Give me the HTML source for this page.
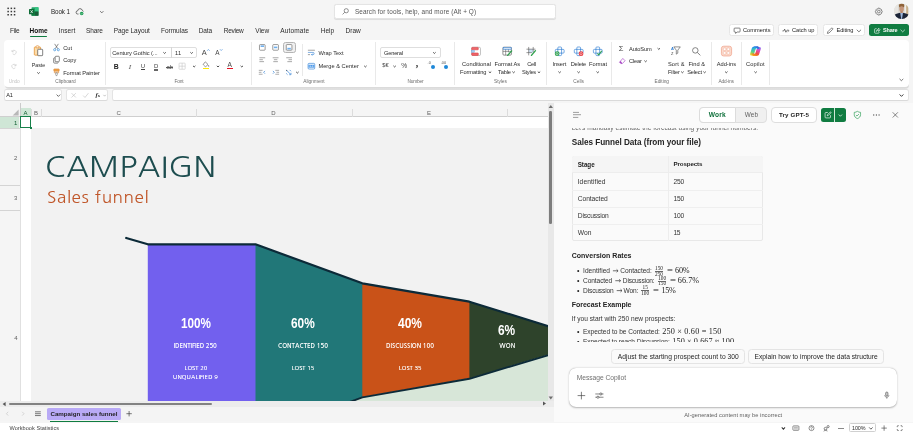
<!DOCTYPE html>
<html lang="en"><head><meta charset="utf-8"><title>Book 1 - Excel</title>
<style>
*{box-sizing:border-box;margin:0;padding:0}
html,body{width:913px;height:433px;overflow:hidden}
body{position:relative;background:#f5f5f5;font-family:'Liberation Sans',sans-serif;color:#242424}
.a{position:absolute}
.t{position:absolute;white-space:pre;line-height:1;font-family:'Liberation Sans',sans-serif}
svg{position:absolute;overflow:visible}
.sep{position:absolute;width:1px;background:#e3e3e3;top:42px;height:43px}
.box{position:absolute;background:#fff;border:1px solid #e4e4e4;border-top-color:#e0e0e0;border-bottom-color:#dadada;border-radius:2.5px}
.btn{position:absolute;background:#fff;border:1px solid #e6e6e6;border-radius:2.5px}
</style></head><body>
<div class="a" style="left:0;top:0;width:913px;height:433px;will-change:transform">

<!-- ============ TITLE BAR ============ -->

<!-- excel logo -->

<!-- cloud saved -->


<!-- search -->
<div class="a" style="left:333.8px;top:4px;width:222.5px;height:15px;background:#fff;border:0.6px solid #e4e4e4;border-radius:2.5px;box-shadow:0 0.5px 0.8px rgba(0,0,0,.10)"></div>

<!-- gear -->

<!-- avatar -->


<!-- ============ MENU ============ -->
<div class="a" style="left:30px;top:35.7px;width:17.2px;height:1.1px;background:#107c41;border-radius:1px"></div>
<!-- top-right buttons -->
<div class="btn" style="left:729px;top:24.4px;width:45.4px;height:11.6px"></div>
<div class="btn" style="left:778px;top:24.4px;width:40.2px;height:11.6px"></div>
<div class="btn" style="left:822.6px;top:24.4px;width:42.6px;height:11.6px"></div>
<div class="a" style="left:869px;top:24.4px;width:40px;height:11.6px;background:#107c41;border-radius:2.5px"></div>







<!-- ============ RIBBON ============ -->
<div class="a" style="left:4.500px;top:84px;width:904px;height:5.400px;background:linear-gradient(#dbdbdb 0,#dbdbdb 80%,#e4e4e4 100%);border-radius:0 0 4px 4px"></div>
<div class="a" style="left:4px;top:40px;width:905px;height:46.600px;background:#fff;border-radius:4px"></div>
<div class="a" style="left:24.3px;top:42px;width:0.7px;height:43px;background:#e9e9e9"></div>
<div class="a" style="left:105.2px;top:42px;width:0.7px;height:43px;background:#e9e9e9"></div>
<div class="a" style="left:251.2px;top:42px;width:0.7px;height:43px;background:#e9e9e9"></div>
<div class="a" style="left:375.0px;top:42px;width:0.7px;height:43px;background:#e9e9e9"></div>
<div class="a" style="left:454.4px;top:42px;width:0.7px;height:43px;background:#e9e9e9"></div>
<div class="a" style="left:546.2px;top:42px;width:0.7px;height:43px;background:#e9e9e9"></div>
<div class="a" style="left:611.1px;top:42px;width:0.7px;height:43px;background:#e9e9e9"></div>
<div class="a" style="left:711.1px;top:42px;width:0.7px;height:43px;background:#e9e9e9"></div>
<div class="a" style="left:740.9px;top:42px;width:0.7px;height:43px;background:#e9e9e9"></div>
<div class="a" style="left:769.4px;top:42px;width:0.7px;height:43px;background:#e9e9e9"></div>
<div class="a" style="left:302.3px;top:44px;width:0.7px;height:31.5px;background:#e9e9e9"></div>







<div class="a" style="left:110.200px;top:46.900px;width:87.200px;height:11px;border:0.600px solid #dedede;border-radius:2px;background:#fff"></div>
<div class="a" style="left:170.500px;top:46.900px;width:0.600px;height:11px;background:#d6d6d6"></div>


<span class="t" style="left:201.800px;top:49.300px;font-size:7.400px;color:#444">A</span>

<span class="t" style="left:215.300px;top:50.100px;font-size:6.400px;color:#444">A</span>




<div class="a" style="left:202.900px;top:67.500px;width:6.400px;height:1.700px;background:#ffea00"></div>


<div class="a" style="left:226.600px;top:67.700px;width:6.400px;height:1.700px;background:#e81123"></div>

<div class="a" style="left:282.600px;top:41.800px;width:13.200px;height:11.200px;border:1px solid #b4b4b4;border-radius:2.500px;background:#efefef"></div>













<div class="a" style="left:379.600px;top:46.900px;width:61px;height:11px;border:0.600px solid #dedede;border-radius:2px;background:#fff"></div>

<span class="t" style="left:382.300px;top:63px;font-size:5.800px;color:#444;letter-spacing:-0.100px">$&#8364;</span>

<span class="t" style="left:401.200px;top:62.900px;font-size:6.600px;color:#444">%</span>
<span class="t" style="left:415.800px;top:59.400px;font-size:10px;font-weight:700;color:#333;font-family:'Liberation Serif',serif">,</span>
<span class="t" style="left:427.59999999999997px;top:62.0px;font-size:3.800px;color:#555">.0</span>
<div class="a" style="left:431.0px;top:65.4px;width:3.600px;height:3.600px;border-radius:2px;background:#1e88d8"></div>
<span class="t" style="left:440.8px;top:62.0px;font-size:3.800px;color:#555">.00</span>
<div class="a" style="left:444.20000000000005px;top:65.4px;width:3.600px;height:3.600px;border-radius:2px;background:#1e88d8"></div>












<span class="t" style="left:618.800px;top:44.600px;font-size:7.600px;color:#444">&#931;</span>














<!-- ============ FORMULA BAR ============ -->
<div class="box" style="left:4px;top:89px;width:58.400px;height:12px"></div>
<div class="box" style="left:66.400px;top:89px;width:41.600px;height:12px"></div>
<div class="box" style="left:112px;top:89px;width:797px;height:12px"></div>



<span class="t" style="left:95.400px;top:91.600px;font-size:6.800px;font-style:italic;font-family:'Liberation Serif',serif;color:#333;font-weight:700">f<span style="font-size:4.400px;font-style:normal">x</span></span>



<!-- ============ GRID ============ -->
<div class="a" style="left:0;top:103px;width:553.6px;height:318px;background:#f5f5f5"></div>
<!-- column header -->
<div class="a" style="left:0;top:107.5px;width:548px;height:9px;background:#f5f5f5;border-bottom:0.7px solid #cfcfcf"></div>
<div class="a" style="left:20.3px;top:107.5px;width:10.7px;height:8.3px;background:#cfe6d6"></div>
<div class="a" style="left:0;top:116.500px;width:18.800px;height:11.500px;background:#cfe6d6"></div>
<div class="a" style="left:19.600px;top:102.600px;width:1px;height:14px;background:#cbcbcb"></div><div class="a" style="left:19.700px;top:116.600px;width:0.800px;height:284.400px;background:#e0e0e0"></div>

<!-- column seps -->
<div class="a" style="left:31px;top:108.500px;width:0.600px;height:8px;background:#dcdcdc"></div>
<div class="a" style="left:41.400px;top:108.500px;width:0.600px;height:8px;background:#dcdcdc"></div>
<div class="a" style="left:196.400px;top:108.500px;width:0.600px;height:8px;background:#dcdcdc"></div>
<div class="a" style="left:351.600px;top:108.500px;width:0.600px;height:8px;background:#dcdcdc"></div>
<div class="a" style="left:506.600px;top:108.500px;width:0.600px;height:8px;background:#dcdcdc"></div>
<!-- row seps -->
<div class="a" style="left:0;top:128px;width:20.300px;height:0.600px;background:#d4d4d4"></div>
<div class="a" style="left:0;top:185.200px;width:20.300px;height:0.600px;background:#d4d4d4"></div>
<div class="a" style="left:0;top:210.300px;width:20.300px;height:0.600px;background:#d4d4d4"></div>

<!-- cells -->
<div class="a" style="left:20.800px;top:116.900px;width:527.200px;height:284.100px;background:#fff"></div>
<div class="a" style="left:31.200px;top:128.200px;width:516.800px;height:272.800px;background:#f2f2f2"></div>
<!-- selection -->
<div class="a" style="left:20.400px;top:116.200px;width:10.900px;height:12.300px;border:0.900px solid #17804a"></div>
<div class="a" style="left:30px;top:127.200px;width:1.800px;height:1.800px;background:#17804a"></div>
<!-- chart -->
<svg class="a" style="left:0;top:0" width="548" height="401" viewBox="0 0 548 401">
<defs><clipPath id="gc"><rect x="31.200" y="128.200" width="516.800" height="272.800"/></clipPath></defs>
<g clip-path="url(#gc)">
<polygon points="345,405 362,397 469.400,378.400 560,351.200 560,405" fill="#d7e6d8"/>
<polygon points="147.800,244.100 257,244.100 257,440 147.800,440" fill="#7260ee"/>
<polygon points="255.500,244.100 364,283.600 364,396.400 255.500,436" fill="#217778"/>
<polygon points="362.300,283 471,301.800 471,378 362.300,397" fill="#c95218"/>
<polygon points="469.400,301.400 560,329.500 560,351.200 469.400,378.400" fill="#2e432b"/>
<polyline points="126.200,238 147.800,244.300 255.500,244.300 362.300,283.300 469.400,301.700 560,329.800" fill="none" stroke="#0c2a38" stroke-width="2.200" stroke-linejoin="round" stroke-linecap="round"/>
<polyline points="255.500,436.400 362.300,397.400 469.400,378.800 560,351.600" fill="none" stroke="#0c2a38" stroke-width="1.900" stroke-linejoin="round"/>
</g></svg>
<!-- v scrollbar -->
<div class="a" style="left:548px;top:103px;width:5.600px;height:298px;background:#e8e8e8"></div>

<div class="a" style="left:549.300px;top:110.600px;width:2.600px;height:113.400px;background:#7d7d7d;border-radius:1.300px"></div>

<!-- h scrollbar -->
<div class="a" style="left:0;top:401px;width:553.600px;height:6px;background:#ececec"></div>

<div class="a" style="left:8.800px;top:402.800px;width:203px;height:2.600px;background:#828282;border-radius:1.300px"></div>

<!-- sheet tabs -->
<div class="a" style="left:0;top:407px;width:553.600px;height:14px;background:#f4f4f4"></div>



<div class="a" style="left:47px;top:408px;width:74px;height:11.600px;background:#b9aaf6;border-radius:1.500px"></div>
<div class="a" style="left:50px;top:420.500px;width:68px;height:1.100px;background:#107c41"></div>


<!-- ============ COPILOT PANEL ============ -->
<div class="a" style="left:553.600px;top:102.600px;width:359.400px;height:319px;background:#fafafa"></div>
<!-- hamburger -->

<!-- work/web toggle -->
<div class="a" style="left:699.300px;top:107px;width:68.200px;height:15.600px;background:#f0f0f0;border:1px solid #dedede;border-radius:4px"></div>
<div class="a" style="left:699.300px;top:107px;width:36.400px;height:15.600px;background:#fff;border:1px solid #dcdcdc;border-radius:4px 0 0 4px"></div>
<!-- try gpt5 -->
<div class="a" style="left:771.400px;top:107px;width:45.200px;height:15.600px;background:#fff;border:1px solid #dedede;border-radius:4px"></div>
<!-- green split button -->
<div class="a" style="left:820.800px;top:108.400px;width:25.400px;height:13.400px;background:#107c41;border-radius:2.500px"></div>
<div class="a" style="left:834.400px;top:108.400px;width:0.500px;height:13.400px;background:#cfe8d8"></div>


<!-- shield -->

<!-- dots -->

<!-- close -->


<!-- table -->
<div class="a" style="left:571.700px;top:155.500px;width:191.500px;height:85.700px;border:0.600px solid #e8e8e8;border-radius:2px;background:#fafafa"></div>
<div class="a" style="left:572.200px;top:156px;width:190.500px;height:16.500px;background:#f5f5f5;border-radius:2px 2px 0 0"></div>
<div class="a" style="left:571.700px;top:172.400px;width:191.500px;height:0.600px;background:#ededed"></div>
<div class="a" style="left:571.700px;top:189.600px;width:191.500px;height:0.600px;background:#efefef"></div>
<div class="a" style="left:571.700px;top:206.800px;width:191.500px;height:0.600px;background:#efefef"></div>
<div class="a" style="left:571.700px;top:224px;width:191.500px;height:0.600px;background:#efefef"></div>
<div class="a" style="left:667.500px;top:155.500px;width:0.600px;height:85.700px;background:#ededed"></div>
<!-- suggestions -->
<div class="a" style="left:611.400px;top:349.400px;width:133.400px;height:14.400px;background:#fafafa;border:0.600px solid #e4e4e4;border-radius:3.500px"></div>
<div class="a" style="left:748.300px;top:349.400px;width:135.700px;height:14.400px;background:#fafafa;border:0.600px solid #e4e4e4;border-radius:3.500px"></div>
<!-- message box -->
<div class="a" style="left:568.700px;top:368.200px;width:328.600px;height:39px;background:#fff;border-radius:7px;box-shadow:0 0.600px 1.800px rgba(0,0,0,.28),0 0 0.600px rgba(0,0,0,.2)"></div>




<!-- ============ STATUS BAR ============ -->
<div class="a" style="left:0;top:422.600px;width:913px;height:10.400px;background:#fff"></div>




<div class="a" style="left:838.400px;top:427.700px;width:5.400px;height:0.800px;background:#8a8a8a"></div>
<div class="a" style="left:849.200px;top:423.400px;width:27.300px;height:8.600px;border:0.600px solid #d0d0d0;border-radius:1.500px;background:#fff"></div>




<svg class="a" style="left:0;top:0;pointer-events:none" width="913" height="433" viewBox="0 0 913 433">
<g transform="translate(7.400,7.600) scale(1.0000,1.0000)" fill="#3b3b3b">
<rect x="0" y="0" width="1.5" height="1.5"/><rect x="3.2" y="0" width="1.5" height="1.5"/><rect x="6.4" y="0" width="1.5" height="1.5"/>
<rect x="0" y="3.2" width="1.5" height="1.5"/><rect x="3.2" y="3.2" width="1.5" height="1.5"/><rect x="6.4" y="3.2" width="1.5" height="1.5"/>
<rect x="0" y="6.4" width="1.5" height="1.5"/><rect x="3.2" y="6.4" width="1.5" height="1.5"/><rect x="6.4" y="6.4" width="1.5" height="1.5"/></g>
<g transform="translate(29.000,7.000) scale(0.5000,0.5000)">
<rect x="5" y="0.5" width="14" height="17" rx="1.5" fill="#21a366"/><rect x="12" y="0.5" width="7" height="8.5" fill="#33c481"/><rect x="5" y="9" width="7" height="8.5" fill="#107c41"/><rect x="12" y="9" width="7" height="8.5" fill="#185c37"/>
<rect x="0" y="4" width="10.5" height="10.5" rx="1.2" fill="#0e6b37"/><path d="M3.2 6.5 L7.4 12 M7.4 6.5 L3.2 12" stroke="#fff" stroke-width="1.4"/></g>
<g transform="translate(75.500,7.800) scale(0.5000,0.5000)" fill="none" stroke="#444" stroke-width="1.5">
<path d="M6 12.5H4.5a3.3 3.3 0 0 1 0-6.6A4.6 4.6 0 0 1 13.5 5 3.4 3.4 0 0 1 15.6 7.5"/><circle cx="12.3" cy="11.5" r="3.6" fill="#1a9c52" stroke="none"/><path d="M10.6 11.6l1.2 1.2 2.1-2.3" stroke="#fff" stroke-width="1.1"/></g>
<g transform="translate(99.600,10.500) scale(0.5500,0.6000)" fill="none" stroke="#555" stroke-width="1.3"><path d="M1 1l3 3 3-3"/></g>
<g transform="translate(342.000,8.000) scale(0.5833,0.5833)" fill="none" stroke="#555" stroke-width="1.1"><circle cx="7.3" cy="4.7" r="3.6"/><path d="M4.7 7.3L1 11"/></g>
<g transform="translate(874.400,7.200) scale(0.5500,0.5500)" fill="none" stroke="#555" stroke-width="1.2"><circle cx="8" cy="8" r="2.4"/><path d="M8 1.6l1.5.4.5 1.6 1.6-.5 1.2 1.2-.5 1.6 1.6.5.4 1.6-.4 1.6-1.6.5.5 1.6-1.2 1.2-1.6-.5-.5 1.6-1.5.4-1.5-.4-.5-1.6-1.6.5-1.2-1.2.5-1.6-1.6-.5L1.700 8l.4-1.600 1.600-.5-.5-1.600 1.200-1.200 1.600.5.500-1.600z" stroke-linejoin="round"/></g>
<g transform="translate(893.900,3.500) scale(0.5133,0.5133)"><defs><clipPath id="av"><circle cx="15" cy="15" r="15"/></clipPath></defs>
<g clip-path="url(#av)"><rect width="30" height="30" fill="#dbd9d4"/><rect x="0" y="0" width="8" height="30" fill="#e7e5e1"/><rect x="21" y="0" width="3" height="30" fill="#efece6"/><rect x="24" y="0" width="3.500" height="30" fill="#c9b08a"/><rect x="27.500" y="0" width="3" height="30" fill="#e3ded5"/>
<ellipse cx="15" cy="4.600" rx="5.200" ry="4.600" fill="#8e6238"/>
<ellipse cx="15" cy="10.800" rx="4.400" ry="5.600" fill="#c4957a"/><rect x="12.800" y="15" width="4.400" height="4.500" fill="#b78669"/>
<path d="M12.300 18.500h5.400L17 30h-4z" fill="#9bb6de"/>
<path d="M0 30v-6.500c2.500-3 7-4 12.300-5.300L14.200 30zM30 30v-6.500c-2.500-3-7-4-12.300-5.300L15.800 30z" fill="#1b2438"/></g></g>
<g transform="translate(733.600,27.600) scale(0.5000,0.4923)" fill="none" stroke="#333" stroke-width="1.2"><path d="M2.500 1h9a1.500 1.500 0 0 1 1.500 1.500v5a1.500 1.500 0 0 1-1.500 1.500H7l-3 2.800V9H2.500A1.500 1.500 0 0 1 1 7.500v-5A1.500 1.500 0 0 1 2.500 1z"/></g>
<g transform="translate(782.200,28.400) scale(0.5143,0.5111)" fill="none" stroke="#333" stroke-width="1.3"><path d="M0.500 5h2.500l1.800-3.500 2.400 6 1.800-3.500h1.500"/><path d="M10.500 2.500l3 2-3 2" stroke-width="1.1"/></g>
<g transform="translate(826.400,27.400) scale(0.5000,0.5000)" fill="none" stroke="#333" stroke-width="1.2"><path d="M2 12l.8-3.300L10 1.500a1.400 1.400 0 0 1 2 0l.5.500a1.400 1.400 0 0 1 0 2L5.300 11.200z"/></g>
<g transform="translate(856.200,29.200) scale(0.5400,0.5333)" fill="none" stroke="#333" stroke-width="1.200"><path d="M1 1l4 4 4-4"/></g>
<g transform="translate(873.600,27.200) scale(0.5000,0.5000)" fill="none" stroke="#fff" stroke-width="1.200"><path d="M6 3H3.500A1.500 1.500 0 0 0 2 4.500v6A1.500 1.500 0 0 0 3.500 12h6a1.500 1.500 0 0 0 1.500-1.500V9"/><path d="M5.500 8.500c.3-2.800 2-4.300 4.500-4.300V2l3 3.200-3 3.200V6.200c-2 0-3.300.6-4.500 2.300z"/></g>
<g transform="translate(900.000,29.200) scale(0.5400,0.5333)" fill="none" stroke="#fff" stroke-width="1.200"><path d="M1 1l4 4 4-4"/></g>
<g transform="translate(11.000,49.000) scale(0.5000,0.5000)" fill="none" stroke="#c6c6c6" stroke-width="1.200"><path d="M2 2v3.500h3.500M2.300 5.300A4.200 4.200 0 1 1 3.300 9.700"/></g>
<g transform="translate(11.000,63.000) scale(0.5000,0.5000)" fill="none" stroke="#c6c6c6" stroke-width="1.200"><path d="M10 2v3.500H6.500M9.700 5.300A4.200 4.200 0 1 0 8.700 9.700"/></g>
<g transform="translate(33.800,45.400) scale(0.5222,0.5143)" ><rect x="1" y="3" width="12" height="16" rx="1.500" fill="#fcdcaa" stroke="#e59433" stroke-width="1.500"/><rect x="4.500" y="0.800" width="5" height="4" rx="1" fill="#fff" stroke="#e08a2c" stroke-width="1.300"/><rect x="7.500" y="7.500" width="9.500" height="12.500" rx="1.300" fill="#fff" stroke="#555" stroke-width="1.400"/></g>
<g transform="translate(36.900,72.040) scale(0.4000,0.3840)" fill="none" stroke="#444" stroke-width="2.4"><path d="M1 1l3 3 3-3"/></g>
<g transform="translate(53.300,43.600) scale(0.5333,0.5429)" ><path d="M2.500 0.500l6 9M9.500 0.500l-6 9" stroke="#555" stroke-width="1.200" fill="none"/><circle cx="2.600" cy="11.300" r="2" fill="none" stroke="#2b88d8" stroke-width="1.200"/><circle cx="9.400" cy="11.300" r="2" fill="none" stroke="#2b88d8" stroke-width="1.200"/></g>
<g transform="translate(53.300,55.900) scale(0.5333,0.5429)" ><rect x="3.500" y="0.700" width="7.800" height="10" rx="1.500" fill="#fff" stroke="#555" stroke-width="1.300"/><path d="M3 3.500H2.200A1.500 1.500 0 0 0 0.700 5v6.800a1.500 1.500 0 0 0 1.500 1.500h5.600a1.500 1.500 0 0 0 1.500-1.500" fill="none" stroke="#555" stroke-width="1.300"/></g>
<g transform="translate(53.300,68.500) scale(0.5333,0.5333)" ><rect x="1" y="0.800" width="10" height="4.400" rx="1" fill="#f0a24a" stroke="#d9822b" stroke-width="1"/><path d="M2 5.500v2.500h8V5.500" fill="none" stroke="#d9822b" stroke-width="1.200"/><path d="M4.500 8v3.500l1.500 2.700 1.500-2.700V8z" fill="#fff" stroke="#666" stroke-width="1"/></g>
<g transform="translate(163.000,51.940) scale(0.4000,0.3840)" fill="none" stroke="#444" stroke-width="2.4"><path d="M1 1l3 3 3-3"/></g>
<g transform="translate(190.000,51.940) scale(0.4000,0.3840)" fill="none" stroke="#444" stroke-width="2.4"><path d="M1 1l3 3 3-3"/></g>
<g transform="translate(206.900,49.000) scale(0.5000,0.5000)" fill="none" stroke="#2b7cd3" stroke-width="1.200"><path d="M0.500 3.500L3 1l2.500 2.500"/></g>
<g transform="translate(219.700,49.000) scale(0.5000,0.5000)" fill="none" stroke="#2b7cd3" stroke-width="1.200"><path d="M0.500 0.500L3 3l2.500-2.500"/></g>
<g transform="translate(178.700,62.800) scale(0.5667,0.5667)" fill="none" stroke="#c2c2c2" stroke-width="1"><rect x="0.600" y="0.600" width="10.800" height="10.800" rx="1"/><path d="M6 0.600v10.800M0.600 6h10.800"/></g>
<g transform="translate(192.600,65.440) scale(0.4000,0.3840)" fill="none" stroke="#444" stroke-width="2.4"><path d="M1 1l3 3 3-3"/></g>
<g transform="translate(202.700,61.200) scale(0.5667,0.5455)" ><path d="M4.600 1.200l4.800 4.800-3.600 3.600a1.200 1.200 0 0 1-1.700 0L1.400 6.900a1.200 1.200 0 0 1 0-1.700z" fill="#fff" stroke="#555" stroke-width="1.100"/><path d="M10.600 6.800c.7 1 1 1.600 1 2.100a1 1 0 0 1-2 0c0-.5.300-1.100 1-2.100z" fill="#555"/></g>
<g transform="translate(216.400,65.440) scale(0.4000,0.3840)" fill="none" stroke="#444" stroke-width="2.4"><path d="M1 1l3 3 3-3"/></g>
<g transform="translate(240.200,65.440) scale(0.4000,0.3840)" fill="none" stroke="#444" stroke-width="2.4"><path d="M1 1l3 3 3-3"/></g>
<g transform="translate(259.100,44.200) scale(0.5333,0.5333)" ><rect x="0.700" y="0.700" width="10.600" height="10.600" rx="1.500" fill="#fff" stroke="#555" stroke-width="1.100"/><rect x="2.800" y="2.2" width="6.400" height="3" fill="#6fb0ee"/></g>
<g transform="translate(272.400,44.200) scale(0.5333,0.5333)" ><rect x="0.700" y="0.700" width="10.600" height="10.600" rx="1.500" fill="#fff" stroke="#555" stroke-width="1.100"/><rect x="2.800" y="4.5" width="6.400" height="3" fill="#6fb0ee"/></g>
<g transform="translate(285.900,44.200) scale(0.5333,0.5333)" ><rect x="0.700" y="0.700" width="10.600" height="10.600" rx="1.500" fill="#fff" stroke="#555" stroke-width="1.100"/><rect x="2.800" y="6.8" width="6.400" height="3" fill="#6fb0ee"/></g>
<g transform="translate(259.400,57.200) scale(0.5800,0.5556)" fill="none" stroke="#666" stroke-width="1"><path d="M0 1h10M0 4.500h6M0 8h8"/></g>
<g transform="translate(272.700,57.200) scale(0.5800,0.5556)" fill="none" stroke="#666" stroke-width="1"><path d="M0 1h10M2 4.500h6M1 8h8"/></g>
<g transform="translate(286.200,57.200) scale(0.5800,0.5556)" fill="none" stroke="#666" stroke-width="1"><path d="M0 1h10M4 4.500h6M2 8h8"/></g>
<g transform="translate(258.800,69.800) scale(0.5385,0.5556)" stroke-width="1"><path d="M0 1h7M0 4.500h5M0 8h7" stroke="#666" fill="none"/><path d="M11.500 2L9 4.500 11.500 7" stroke="#2b7cd3" fill="none" stroke-width="1.200"/></g>
<g transform="translate(272.100,69.800) scale(0.5385,0.5556)" stroke-width="1"><path d="M6 1h7M8 4.500h5M6 8h7" stroke="#666" fill="none"/><path d="M1.500 2L4 4.500 1.500 7" stroke="#2b7cd3" fill="none" stroke-width="1.200"/></g>
<g transform="translate(285.400,69.100) scale(0.5333,0.5333)" ><path d="M1 1l3 1-2 2z" fill="#444"/><path d="M2.500 2.500l7 7" stroke="#2b7cd3" stroke-width="1.300"/><path d="M8 1.500l2.500 2.500M4 10.500L1.500 8" stroke="#2b7cd3" stroke-width="1.200"/><path d="M10.500 7v3.500H7" stroke="#2b7cd3" fill="none" stroke-width="1.200"/></g>
<g transform="translate(295.800,71.540) scale(0.4000,0.3840)" fill="none" stroke="#444" stroke-width="2.4"><path d="M1 1l3 3 3-3"/></g>
<g transform="translate(307.900,49.700) scale(0.5385,0.5455)" stroke-width="1.100"><path d="M0 1h13" stroke="#666"/><path d="M0 5h9.500a2 2 0 0 1 0 4H7" stroke="#2b7cd3" fill="none"/><path d="M8.300 7.600L6.500 9l1.800 1.400" stroke="#2b7cd3" fill="none"/><path d="M0 9h4" stroke="#666"/></g>
<g transform="translate(307.700,63.000) scale(0.5286,0.5333)" ><rect x="0.700" y="0.700" width="12.600" height="10.600" rx="1.800" fill="#fff" stroke="#2b7cd3" stroke-width="1.200"/><rect x="1.500" y="3.300" width="11" height="5.400" fill="#4a98ea"/><path d="M3 6h3M4.800 4.800L6 6 4.800 7.200M11 6H8M9.200 4.800L8 6l1.200 1.200" stroke="#fff" stroke-width="0.900" fill="none"/></g>
<g transform="translate(363.800,65.440) scale(0.4000,0.3840)" fill="none" stroke="#444" stroke-width="2.4"><path d="M1 1l3 3 3-3"/></g>
<g transform="translate(432.800,51.940) scale(0.4000,0.3840)" fill="none" stroke="#444" stroke-width="2.4"><path d="M1 1l3 3 3-3"/></g>
<g transform="translate(393.000,65.440) scale(0.4000,0.3840)" fill="none" stroke="#444" stroke-width="2.4"><path d="M1 1l3 3 3-3"/></g>
<g transform="translate(471.200,46.800) scale(0.4900,0.4842)" ><rect x="1" y="1" width="18" height="17" rx="2.500" fill="#fff" stroke="#9a9a9a" stroke-width="1.200"/><rect x="1" y="1.200" width="13.500" height="5" rx="1.200" fill="#f0666a" stroke="#d9393e" stroke-width="1.100"/><rect x="1" y="7.600" width="5.500" height="3.800" fill="#a5cdf2" stroke="#5aa0e0" stroke-width="0.800"/><rect x="1" y="12.800" width="13.500" height="5" rx="1.200" fill="#f0666a" stroke="#d9393e" stroke-width="1.100"/></g>
<g transform="translate(502.400,46.700) scale(0.5000,0.4947)" ><rect x="1" y="1" width="17" height="16" rx="2" fill="#fff" stroke="#555" stroke-width="1.300"/><rect x="1.500" y="1.500" width="16" height="4" fill="#cfe2f7" stroke="#2b7cd3" stroke-width="1"/><path d="M1 9.500h17M6.500 5.500v11.500M12 5.500v6" stroke="#555" stroke-width="1.100"/><path d="M10.500 17.500L18.500 8.500" stroke="#2ea04c" stroke-width="2.800" fill="none" stroke-linecap="round"/></g>
<g transform="translate(526.200,46.700) scale(0.5000,0.4947)" ><rect x="5" y="5" width="9" height="7" fill="#cfe2f7"/><path d="M5 0.500v17M14 0.500v11M0.500 5h18M0.500 12h11" stroke="#555" stroke-width="1.200" fill="none"/><path d="M10.500 17.500L18.500 8" stroke="#2ea04c" stroke-width="2.800" fill="none" stroke-linecap="round"/></g>
<g transform="translate(488.400,71.240) scale(0.4000,0.3840)" fill="none" stroke="#444" stroke-width="2.4"><path d="M1 1l3 3 3-3"/></g>
<g transform="translate(512.000,71.240) scale(0.4000,0.3840)" fill="none" stroke="#444" stroke-width="2.4"><path d="M1 1l3 3 3-3"/></g>
<g transform="translate(537.400,71.240) scale(0.4000,0.3840)" fill="none" stroke="#444" stroke-width="2.4"><path d="M1 1l3 3 3-3"/></g>
<g transform="translate(554.800,46.600) scale(0.5053,0.5053)" ><rect x="6" y="0.800" width="7.400" height="17" rx="1.800" fill="#fff" stroke="#2b7cd3" stroke-width="1.300"/><rect x="1" y="5.500" width="17.400" height="7.400" rx="1.800" fill="none" stroke="#2b7cd3" stroke-width="1.300"/><circle cx="4.600" cy="14" r="4.600" fill="#2ea04c"/><circle cx="4.600" cy="14" r="2.200" fill="none" stroke="#fff" stroke-width="1"/></g>
<g transform="translate(573.800,46.600) scale(0.5053,0.5053)" ><rect x="6" y="0.800" width="7.400" height="17" rx="1.800" fill="#fff" stroke="#2b7cd3" stroke-width="1.300"/><rect x="1" y="5.500" width="17.400" height="7.400" rx="1.800" fill="none" stroke="#2b7cd3" stroke-width="1.300"/><circle cx="14.400" cy="14" r="4.600" fill="#e8333a"/><circle cx="14.400" cy="14" r="2.200" fill="none" stroke="#fff" stroke-width="1"/></g>
<g transform="translate(592.900,46.600) scale(0.5053,0.5053)" ><rect x="6" y="0.800" width="7.400" height="17" rx="1.800" fill="#fff" stroke="#2b7cd3" stroke-width="1.300"/><rect x="1" y="5.500" width="17.400" height="7.400" rx="1.800" fill="none" stroke="#2b7cd3" stroke-width="1.300"/><path d="M9 13.500l2.500 3 6-8" stroke="#2ea04c" stroke-width="2" fill="none"/></g>
<g transform="translate(558.000,71.240) scale(0.4000,0.3840)" fill="none" stroke="#444" stroke-width="2.4"><path d="M1 1l3 3 3-3"/></g>
<g transform="translate(577.000,71.240) scale(0.4000,0.3840)" fill="none" stroke="#444" stroke-width="2.4"><path d="M1 1l3 3 3-3"/></g>
<g transform="translate(596.100,71.240) scale(0.4000,0.3840)" fill="none" stroke="#444" stroke-width="2.4"><path d="M1 1l3 3 3-3"/></g>
<g transform="translate(657.200,47.840) scale(0.4000,0.3840)" fill="none" stroke="#444" stroke-width="2.4"><path d="M1 1l3 3 3-3"/></g>
<g transform="translate(618.900,57.800) scale(0.5231,0.5333)" ><path d="M7.500 1.200l4.300 4.300-5.300 5.300H3.800L1.200 8.200z" fill="#fff" stroke="#a33cc2" stroke-width="1.200"/><path d="M1.200 8.200l2.600 2.600h2.700L3.600 5.800z" fill="#a33cc2"/></g>
<g transform="translate(644.000,60.240) scale(0.4000,0.3840)" fill="none" stroke="#444" stroke-width="2.4"><path d="M1 1l3 3 3-3"/></g>
<g transform="translate(670.800,46.400) scale(0.5000,0.5000)" ><path d="M6 1h13l-5 6.500v6l-3 2v-8z" fill="#fff" stroke="#555" stroke-width="1.300" stroke-linejoin="round"/><text x="0.500" y="8" font-size="8" font-family="Liberation Sans,sans-serif" fill="#2b7cd3" font-weight="700">A</text><text x="0.500" y="17.500" font-size="8" font-family="Liberation Sans,sans-serif" fill="#444">Z</text></g>
<g transform="translate(680.800,71.240) scale(0.4000,0.3840)" fill="none" stroke="#444" stroke-width="2.4"><path d="M1 1l3 3 3-3"/></g>
<g transform="translate(691.800,46.900) scale(0.5000,0.5000)" ><circle cx="7" cy="7" r="5.500" fill="none" stroke="#555" stroke-width="1.400"/><path d="M11 11l6 6" stroke="#555" stroke-width="1.500"/></g>
<g transform="translate(703.000,71.240) scale(0.4000,0.3840)" fill="none" stroke="#444" stroke-width="2.4"><path d="M1 1l3 3 3-3"/></g>
<g transform="translate(721.000,45.800) scale(0.5000,0.5048)" ><rect x="0.800" y="0.800" width="20.400" height="19.400" rx="4.500" fill="#fbdccf" stroke="#f0a088" stroke-width="1.400"/><rect x="4.600" y="4.200" width="5.200" height="5.200" rx="1.400" fill="#fff" stroke="#f0a088" stroke-width="0.900"/><rect x="12.200" y="4.200" width="5.200" height="5.200" rx="1.400" fill="#fff" stroke="#f0a088" stroke-width="0.900"/><rect x="4.600" y="11.600" width="5.200" height="5.200" rx="1.400" fill="#fff" stroke="#f0a088" stroke-width="0.900"/><rect x="12.200" y="11.600" width="5.200" height="5.200" rx="1.400" fill="#fff" stroke="#f0a088" stroke-width="0.900"/></g>
<g transform="translate(724.700,71.240) scale(0.4000,0.3840)" fill="none" stroke="#444" stroke-width="2.4"><path d="M1 1l3 3 3-3"/></g>
<g transform="translate(749.700,46.100) scale(0.5043,0.5000)" ><defs><linearGradient id="cpa" x1="0.700" y1="0" x2="0.200" y2="1"><stop offset="0" stop-color="#1f57d6"/><stop offset="0.350" stop-color="#25a6e8"/><stop offset="0.650" stop-color="#58d38a"/><stop offset="1" stop-color="#f4cf1c"/></linearGradient><linearGradient id="cpb" x1="0.300" y1="1" x2="0.800" y2="0"><stop offset="0" stop-color="#f4a21c"/><stop offset="0.300" stop-color="#f0503a"/><stop offset="0.650" stop-color="#e04bc0"/><stop offset="1" stop-color="#8c6cf4"/></linearGradient></defs><path id="cph" d="M9 0.600h5.800c2 0 3.100 1 3.600 2.600l.8 2.600h-4.200c-1.500 0-2.500.8-3 2.300l-2.600 8.200c-.5 1.600-1.600 2.500-3.300 2.500H4c-2.600 0-3.700-1.900-3-4.200l3-9.600C4.800 2 6.600.6 9 .6z" fill="url(#cpa)"/><path d="M14 19.800H8.200c-2 0-3.100-1-3.600-2.600l-.8-2.600H8c1.500 0 2.500-.8 3-2.300l2.600-8.200c.5-1.600 1.600-2.500 3.300-2.500H19c2.600 0 3.700 1.900 3 4.200l-3 9.600c-.8 3-2.600 4.400-5 4.400z" fill="url(#cpb)"/><path d="M9 0.600h5.800c2 0 3.100 1 3.600 2.600l.8 2.600h-4.200c-1.500 0-2.500.8-3 2.300L10.500 13 7 6z" fill="url(#cpa)" opacity="0.900"/><path d="M10 14.500l3.200-9.500" stroke="#fff" stroke-width="2" stroke-linecap="round" opacity="0.950"/></g>
<g transform="translate(754.000,71.240) scale(0.4000,0.3840)" fill="none" stroke="#444" stroke-width="2.4"><path d="M1 1l3 3 3-3"/></g>
<g transform="translate(898.900,78.300) scale(0.6250,0.6000)" fill="none" stroke="#444" stroke-width="1.2"><path d="M1 1l3 3 3-3"/></g>
<g transform="translate(56.000,94.000) scale(0.6000,0.6000)" fill="none" stroke="#444" stroke-width="1.300"><path d="M1 1l3 3 3-3"/></g>
<g transform="translate(71.000,92.600) scale(0.5400,0.5400)" fill="none" stroke="#bdbdbd" stroke-width="1.100"><path d="M1 1l8 8M9 1l-8 8"/></g>
<g transform="translate(82.600,92.600) scale(0.5333,0.5400)" fill="none" stroke="#bdbdbd" stroke-width="1.100"><path d="M1 5.500l3.500 3.500L11 1"/></g>
<g transform="translate(103.000,94.400) scale(0.4000,0.4400)" fill="none" stroke="#999" stroke-width="1.300"><path d="M1 1l3 3 3-3"/></g>
<g transform="translate(899.000,93.800) scale(0.6250,0.6400)" fill="none" stroke="#333" stroke-width="1.500"><path d="M1 1l3 3 3-3"/></g>
<g transform="translate(12.600,109.400) scale(1.0000,1.0000)"><path d="M6 0v6H0z" fill="#b8b8b8"/></g>
<g transform="translate(548.600,105.000) scale(0.5500,0.6000)"><path d="M4 0l4 5H0z" fill="#6e6e6e"/></g>
<g transform="translate(548.600,396.400) scale(0.5500,0.6000)"><path d="M4 5l4-5H0z" fill="#6e6e6e"/></g>
<g transform="translate(2.600,402.000) scale(0.6000,0.5250)"><path d="M0 4l5-4v8z" fill="#555"/></g>
<g transform="translate(543.000,401.400) scale(0.6000,0.5250)"><path d="M5 4l-5-4v8z" fill="#555"/></g>
<g transform="translate(5.800,411.200) scale(0.6000,0.6250)" fill="none" stroke="#c8c8c8" stroke-width="1.200"><path d="M4 1L1 4l3 3"/></g>
<g transform="translate(21.600,411.200) scale(0.6000,0.6250)" fill="none" stroke="#c8c8c8" stroke-width="1.200"><path d="M1 1l3 3-3 3"/></g>
<g transform="translate(35.000,411.200) scale(0.5800,0.6250)" fill="none" stroke="#555" stroke-width="1.300"><path d="M0 1h10M0 4h10M0 7h10"/></g>
<g transform="translate(126.400,411.000) scale(0.5400,0.5400)" fill="none" stroke="#333" stroke-width="1.200"><path d="M5 0v10M0 5h10"/></g>
<g transform="translate(573.000,111.400) scale(1.0000,1.0000)" fill="none" stroke="#777" stroke-width="0.700"><path d="M0 1h6M0 3.300h8M0 6h5.300"/></g>
<g transform="translate(824.000,111.400) scale(0.5429,0.5429)" fill="none" stroke="#fff" stroke-width="1.200"><path d="M7 2H3.500A1.500 1.500 0 0 0 2 3.500v7A1.500 1.500 0 0 0 3.500 12h7a1.500 1.500 0 0 0 1.500-1.500V7"/><path d="M6 8l.4-1.800 5-5a1 1 0 0 1 1.400 1.400l-5 5z"/></g>
<g transform="translate(838.200,114.000) scale(0.5500,0.5600)" fill="none" stroke="#fff" stroke-width="1.300"><path d="M1 1l3 3 3-3"/></g>
<g transform="translate(853.600,110.800) scale(0.5429,0.5250)" fill="none" stroke="#2e9f57" stroke-width="1.300"><path d="M7 1c1.800 1.300 3.600 1.900 5.800 2v4.500c0 3.500-2.300 6-5.800 7.300C3.500 13.500 1.200 11 1.200 7.500V3C3.400 2.900 5.200 2.300 7 1z"/><path d="M4.300 8l2 2 3.500-3.800"/></g>
<g transform="translate(873.000,114.200) scale(0.4857,0.5333)" fill="#555"><circle cx="1.500" cy="1.500" r="1.300"/><circle cx="7" cy="1.500" r="1.300"/><circle cx="12.500" cy="1.500" r="1.300"/></g>
<g transform="translate(892.400,112.000) scale(0.5800,0.5800)" fill="none" stroke="#444" stroke-width="1.100"><path d="M0.500 0.500l9 9M9.500 0.500l-9 9"/></g>
<g transform="translate(577.600,391.800) scale(0.7600,0.7600)" fill="none" stroke="#444" stroke-width="0.900"><path d="M5 0v10M0 5h10"/></g>
<g transform="translate(595.300,392.300) scale(0.5857,0.6000)" fill="none" stroke="#444" stroke-width="1.100"><path d="M0 2.800h14M0 8.200h14"/><circle cx="9.500" cy="2.800" r="1.800" fill="#fff"/><circle cx="4.500" cy="8.200" r="1.800" fill="#fff"/></g>
<g transform="translate(884.200,391.600) scale(0.5200,0.5067)" fill="none" stroke="#555" stroke-width="1.200"><rect x="2.800" y="0.800" width="4.400" height="8" rx="2.200" fill="#cfcfcf"/><path d="M1 7c0 2.500 1.700 4 4 4s4-1.500 4-4M5 11v3"/></g>
<g transform="translate(781.200,426.800) scale(0.5500,0.6000)" fill="none" stroke="#333" stroke-width="1.700"><path d="M1 1l3 3 3-3"/></g>
<g transform="translate(792.600,425.600) scale(0.5077,0.5000)" fill="none" stroke="#444" stroke-width="1.200"><rect x="0.600" y="0.600" width="11.800" height="8.800" rx="1.500"/><path d="M3 3.500h7M3 6.500h7" stroke-width="1.400" stroke-dasharray="1.200 0.800"/></g>
<g transform="translate(808.600,425.200) scale(0.4833,0.4833)" fill="none" stroke="#444" stroke-width="1.200"><circle cx="6" cy="6" r="5.200"/><path d="M4.200 4.600c0-1 .8-1.700 1.800-1.700s1.800.7 1.800 1.600c0 1.300-1.800 1.400-1.800 2.700M6 8.600v1"/></g>
<g transform="translate(823.400,425.000) scale(0.5333,0.5333)" fill="none" stroke="#444" stroke-width="1.200"><circle cx="4" cy="7" r="2.600"/><circle cx="8.800" cy="3" r="2"/><path d="M1 12c.5-1.800 1.800-2.400 3-2.400 1.700 0 3 .8 3 2.400"/></g>
<g transform="translate(868.600,426.800) scale(0.5750,0.6000)" fill="none" stroke="#333" stroke-width="1.300"><path d="M1 1l3 3 3-3"/></g>
<g transform="translate(881.400,425.400) scale(0.5400,0.5400)" fill="none" stroke="#444" stroke-width="1.200"><path d="M5 0v10M0 5h10"/></g>
<g transform="translate(896.800,425.200) scale(0.4833,0.4833)" fill="none" stroke="#444" stroke-width="1.400"><path d="M1 4V2.200A1.200 1.200 0 0 1 2.200 1H4M8 1h1.800A1.200 1.200 0 0 1 11 2.200V4M11 8v1.800A1.200 1.200 0 0 1 9.800 11H8M4 11H2.200A1.200 1.200 0 0 1 1 9.800V8"/></g>
<g transform="translate(612.900,268.500) scale(1.0000,1.0000)" fill="none" stroke="#333" stroke-width="0.700"><path d="M0 2.300h5.10M3.70 0.900l1.500 1.400l-1.500 1.400"/></g>
<g transform="translate(615.300,278.400) scale(1.0000,1.0000)" fill="none" stroke="#333" stroke-width="0.700"><path d="M0 2.300h5.20M3.80 0.900l1.500 1.400l-1.500 1.400"/></g>
<g transform="translate(616.700,288.300) scale(1.0000,1.0000)" fill="none" stroke="#333" stroke-width="0.700"><path d="M0 2.300h5.20M3.80 0.900l1.500 1.400l-1.500 1.400"/></g>
</svg>
<span class="t" style="left:51.00px;top:9px;font-size:6.3px;color:#242424;letter-spacing:-0.122px;">Book 1</span>
<span class="t" style="left:354.90px;top:9px;font-size:6.4px;color:#555;letter-spacing:0.110px;">Search for tools, help, and more (Alt + Q)</span>
<span class="t" style="left:10.00px;top:28px;font-size:6.5px;color:#2b2b2b;letter-spacing:-0.261px;">File</span>
<span class="t" style="left:58.50px;top:28px;font-size:6.5px;color:#2b2b2b;letter-spacing:0.107px;">Insert</span>
<span class="t" style="left:86.00px;top:28px;font-size:6.5px;color:#2b2b2b;letter-spacing:-0.115px;">Share</span>
<span class="t" style="left:113.70px;top:28px;font-size:6.5px;color:#2b2b2b;letter-spacing:-0.032px;">Page Layout</span>
<span class="t" style="left:161.00px;top:28px;font-size:6.5px;color:#2b2b2b;letter-spacing:-0.013px;">Formulas</span>
<span class="t" style="left:198.80px;top:28px;font-size:6.5px;color:#2b2b2b;letter-spacing:-0.178px;">Data</span>
<span class="t" style="left:223.80px;top:28px;font-size:6.5px;color:#2b2b2b;letter-spacing:-0.263px;">Review</span>
<span class="t" style="left:255.30px;top:28px;font-size:6.5px;color:#2b2b2b;letter-spacing:-0.061px;">View</span>
<span class="t" style="left:280.30px;top:28px;font-size:6.5px;color:#2b2b2b;letter-spacing:0.153px;">Automate</span>
<span class="t" style="left:320.70px;top:28px;font-size:6.5px;color:#2b2b2b;letter-spacing:0.042px;">Help</span>
<span class="t" style="left:345.40px;top:28px;font-size:6.5px;color:#2b2b2b;letter-spacing:0.076px;">Draw</span>
<span class="t" style="left:29.60px;top:28px;font-size:6.5px;color:#111;letter-spacing:-0.021px;font-weight:700;">Home</span>
<span class="t" style="left:743.00px;top:28px;font-size:5.7px;color:#242424;">Comments</span>
<span class="t" style="left:792.00px;top:28px;font-size:5.7px;color:#242424;letter-spacing:-0.038px;">Catch up</span>
<span class="t" style="left:836.50px;top:28px;font-size:5.7px;color:#242424;letter-spacing:-0.065px;">Editing</span>
<span class="t" style="left:883.00px;top:28px;font-size:5.5px;color:#fff;letter-spacing:-0.199px;font-weight:700;">Share</span>
<span class="t" style="left:8.80px;top:80px;font-size:4.8px;color:#c4c4c4;letter-spacing:-0.223px;">Undo</span>
<span class="t" style="left:31.80px;top:63px;font-size:5.3px;color:#2b2b2b;letter-spacing:-0.062px;">Paste</span>
<span class="t" style="left:63.20px;top:46px;font-size:5.7px;color:#2b2b2b;letter-spacing:-0.030px;">Cut</span>
<span class="t" style="left:63.20px;top:58px;font-size:5.7px;color:#2b2b2b;letter-spacing:-0.060px;">Copy</span>
<span class="t" style="left:63.20px;top:71px;font-size:5.7px;color:#2b2b2b;letter-spacing:-0.063px;">Format Painter</span>
<span class="t" style="left:55.30px;top:80px;font-size:4.8px;color:#6e6e6e;letter-spacing:-0.006px;">Clipboard</span>
<span class="t" style="left:112.30px;top:51px;font-size:5.7px;color:#2b2b2b;letter-spacing:-0.053px;">Century Gothic (...</span>
<span class="t" style="left:175.00px;top:51px;font-size:5.6px;color:#2b2b2b;letter-spacing:0.387px;">11</span>
<span class="t" style="left:174.50px;top:80px;font-size:4.8px;color:#6e6e6e;letter-spacing:-0.203px;">Font</span>
<span class="t" style="left:318.40px;top:51px;font-size:5.7px;color:#2b2b2b;letter-spacing:-0.038px;">Wrap Text</span>
<span class="t" style="left:318.40px;top:64px;font-size:5.7px;color:#2b2b2b;letter-spacing:0.019px;">Merge &amp; Center</span>
<span class="t" style="left:303.20px;top:80px;font-size:4.8px;color:#6e6e6e;letter-spacing:0.007px;">Alignment</span>
<span class="t" style="left:384.00px;top:51px;font-size:5.7px;color:#2b2b2b;letter-spacing:-0.206px;">General</span>
<span class="t" style="left:407.50px;top:80px;font-size:4.8px;color:#6e6e6e;letter-spacing:-0.212px;">Number</span>
<span class="t" style="left:462.10px;top:62px;font-size:5.7px;color:#2b2b2b;letter-spacing:0.043px;">Conditional</span>
<span class="t" style="left:460.00px;top:70px;font-size:5.7px;color:#2b2b2b;letter-spacing:-0.076px;">Formatting</span>
<span class="t" style="left:494.60px;top:62px;font-size:5.7px;color:#2b2b2b;letter-spacing:-0.065px;">Format As</span>
<span class="t" style="left:498.00px;top:70px;font-size:5.7px;color:#2b2b2b;letter-spacing:-0.152px;">Table</span>
<span class="t" style="left:527.20px;top:62px;font-size:5.7px;color:#2b2b2b;letter-spacing:-0.338px;">Cell</span>
<span class="t" style="left:522.00px;top:70px;font-size:5.7px;color:#2b2b2b;letter-spacing:-0.260px;">Styles</span>
<span class="t" style="left:494.00px;top:80px;font-size:4.8px;color:#6e6e6e;letter-spacing:-0.056px;">Styles</span>
<span class="t" style="left:552.60px;top:62px;font-size:5.7px;color:#2b2b2b;letter-spacing:-0.107px;">Insert</span>
<span class="t" style="left:570.70px;top:62px;font-size:5.7px;color:#2b2b2b;letter-spacing:-0.171px;">Delete</span>
<span class="t" style="left:589.00px;top:62px;font-size:5.7px;color:#2b2b2b;">Format</span>
<span class="t" style="left:573.30px;top:80px;font-size:4.8px;color:#6e6e6e;letter-spacing:-0.018px;">Cells</span>
<span class="t" style="left:629.00px;top:47px;font-size:5.7px;color:#2b2b2b;letter-spacing:-0.101px;">AutoSum</span>
<span class="t" style="left:629.00px;top:59px;font-size:5.7px;color:#2b2b2b;letter-spacing:-0.148px;">Clear</span>
<span class="t" style="left:667.90px;top:62px;font-size:5.7px;color:#2b2b2b;letter-spacing:0.178px;">Sort &amp;</span>
<span class="t" style="left:667.90px;top:70px;font-size:5.7px;color:#2b2b2b;letter-spacing:-0.108px;">Filter</span>
<span class="t" style="left:688.40px;top:62px;font-size:5.7px;color:#2b2b2b;letter-spacing:0.029px;">Find &amp;</span>
<span class="t" style="left:687.20px;top:70px;font-size:5.7px;color:#2b2b2b;letter-spacing:-0.203px;">Select</span>
<span class="t" style="left:654.50px;top:80px;font-size:4.8px;color:#6e6e6e;letter-spacing:-0.029px;">Editing</span>
<span class="t" style="left:716.70px;top:62px;font-size:5.7px;color:#2b2b2b;">Add-ins</span>
<span class="t" style="left:718.50px;top:80px;font-size:4.8px;color:#6e6e6e;letter-spacing:-0.128px;">Add-ins</span>
<span class="t" style="left:746.00px;top:62px;font-size:5.7px;color:#2b2b2b;letter-spacing:0.164px;">Copilot</span>
<span class="t" style="left:6.30px;top:93px;font-size:5.6px;color:#242424;letter-spacing:-0.244px;">A1</span>
<span class="t" style="left:23.39px;top:110px;font-size:6.0px;color:#0e5c2f;">A</span>
<span class="t" style="left:33.99px;top:110px;font-size:6.0px;color:#5f5f5f;">B</span>
<span class="t" style="left:116.53px;top:110px;font-size:6.0px;color:#5f5f5f;">C</span>
<span class="t" style="left:271.33px;top:110px;font-size:6.0px;color:#5f5f5f;">D</span>
<span class="t" style="left:426.99px;top:110px;font-size:6.0px;color:#5f5f5f;">E</span>
<span class="t" style="left:13.93px;top:120px;font-size:6.0px;color:#0e5c2f;">1</span>
<span class="t" style="left:13.93px;top:155px;font-size:6.0px;color:#5f5f5f;">2</span>
<span class="t" style="left:13.93px;top:195px;font-size:6.0px;color:#5f5f5f;">3</span>
<span class="t" style="left:14.13px;top:335px;font-size:6.0px;color:#5f5f5f;">4</span>
<span class="t" style="left:50.50px;top:411px;font-size:6.2px;color:#1f1f1f;letter-spacing:-0.020px;font-weight:700;">Campaign sales funnel</span>
<span class="t" style="left:9.50px;top:426px;font-size:5.6px;color:#444;letter-spacing:0.027px;">Workbook Statistics</span>
<span class="t" style="left:852.00px;top:426px;font-size:5.4px;color:#2b2b2b;letter-spacing:-0.099px;">100%</span>
<span class="t" style="left:708.80px;top:112px;font-size:6.6px;color:#0f703b;letter-spacing:0.208px;font-weight:700;">Work</span>
<span class="t" style="left:744.80px;top:112px;font-size:6.4px;color:#616161;letter-spacing:0.134px;">Web</span>
<span class="t" style="left:779.00px;top:112px;font-size:6.2px;color:#242424;letter-spacing:0.139px;font-weight:700;">Try GPT-5</span>
<span class="t" style="left:571.80px;top:139px;font-size:8.2px;color:#242424;letter-spacing:-0.045px;font-weight:700;">Sales Funnel Data (from your file)</span>
<span class="t" style="left:577.70px;top:162px;font-size:6.3px;color:#242424;letter-spacing:-0.039px;font-weight:700;">Stage</span>
<span class="t" style="left:673.50px;top:161px;font-size:6.2px;color:#242424;letter-spacing:-0.115px;font-weight:700;">Prospects</span>
<span class="t" style="left:577.70px;top:179px;font-size:6.7px;color:#333;letter-spacing:0.072px;">Identified</span>
<span class="t" style="left:673.50px;top:179px;font-size:6.7px;color:#333;letter-spacing:-0.186px;">250</span>
<span class="t" style="left:577.70px;top:196px;font-size:6.7px;color:#333;letter-spacing:-0.050px;">Contacted</span>
<span class="t" style="left:673.50px;top:196px;font-size:6.7px;color:#333;letter-spacing:-0.186px;">150</span>
<span class="t" style="left:577.70px;top:213px;font-size:6.7px;color:#333;letter-spacing:-0.138px;">Discussion</span>
<span class="t" style="left:673.50px;top:213px;font-size:6.7px;color:#333;letter-spacing:-0.186px;">100</span>
<span class="t" style="left:577.70px;top:230px;font-size:6.7px;color:#333;letter-spacing:0.080px;">Won</span>
<span class="t" style="left:673.50px;top:230px;font-size:6.7px;color:#333;letter-spacing:-0.453px;">15</span>
<span class="t" style="left:571.70px;top:252px;font-size:7.0px;color:#242424;letter-spacing:0.018px;font-weight:700;">Conversion Rates</span>
<span class="t" style="left:571.70px;top:301px;font-size:7.0px;color:#242424;letter-spacing:-0.008px;font-weight:700;">Forecast Example</span>
<span class="t" style="left:571.70px;top:316px;font-size:6.6px;color:#333;letter-spacing:0.013px;">If you start with 250 new prospects:</span>
<span class="t" style="left:617.70px;top:354px;font-size:6.7px;color:#242424;letter-spacing:0.035px;">Adjust the starting prospect count to 300</span>
<span class="t" style="left:754.50px;top:354px;font-size:6.7px;color:#242424;letter-spacing:0.006px;">Explain how to improve the data structure</span>
<span class="t" style="left:576.80px;top:375px;font-size:6.7px;color:#707070;letter-spacing:-0.044px;">Message Copilot</span>
<span class="t" style="left:684.20px;top:413px;font-size:5.7px;color:#616161;letter-spacing:0.035px;">AI-generated content may be incorrect</span>
<span class="t" style="left:45.20px;top:153px;font-size:28.4px;color:#1d4d4f;letter-spacing:0.328px;font-family:'NanumGothic','Liberation Sans',sans-serif;transform:scaleX(1.0920);transform-origin:0 0;">CAMPAIGN</span>
<span class="t" style="left:47.20px;top:189px;font-size:16px;color:#c0572a;letter-spacing:0.547px;font-family:'NanumGothic','Liberation Sans',sans-serif;transform:scaleX(1.0727);transform-origin:0 0;">Sales funnel</span>
<span class="t" style="left:181.30px;top:316px;font-size:14.2px;color:#fff;font-weight:700;transform:scaleX(0.8265);transform-origin:0 0;">100%</span>
<span class="t" style="left:290.90px;top:316px;font-size:14.2px;color:#fff;font-weight:700;transform:scaleX(0.8378);transform-origin:0 0;">60%</span>
<span class="t" style="left:398.20px;top:316px;font-size:14.2px;color:#fff;font-weight:700;transform:scaleX(0.8449);transform-origin:0 0;">40%</span>
<span class="t" style="left:497.60px;top:323px;font-size:14.2px;color:#fff;font-weight:700;transform:scaleX(0.8384);transform-origin:0 0;">6%</span>
<span class="t" style="left:173.70px;top:343px;font-size:6.2px;color:#fff;letter-spacing:-0.115px;font-weight:700;font-family:'NanumGothic','Liberation Sans',sans-serif;">IDENTIFIED 250</span>
<span class="t" style="left:278.10px;top:343px;font-size:6.2px;color:#fff;font-weight:700;font-family:'NanumGothic','Liberation Sans',sans-serif;">CONTACTED 150</span>
<span class="t" style="left:386.00px;top:343px;font-size:6.2px;color:#fff;letter-spacing:-0.056px;font-weight:700;font-family:'NanumGothic','Liberation Sans',sans-serif;">DISCUSSION 100</span>
<span class="t" style="left:499.20px;top:343px;font-size:6.2px;color:#fff;letter-spacing:0.225px;font-weight:700;font-family:'NanumGothic','Liberation Sans',sans-serif;">WON</span>
<span class="t" style="left:184.60px;top:366px;font-size:5.9px;color:#fff;letter-spacing:0.016px;font-family:'NanumGothic','Liberation Sans',sans-serif;text-shadow:0 0 0.4px rgba(255,255,255,.9);">LOST 20</span>
<span class="t" style="left:173.00px;top:375px;font-size:5.9px;color:#fff;letter-spacing:0.131px;font-family:'NanumGothic','Liberation Sans',sans-serif;text-shadow:0 0 0.4px rgba(255,255,255,.9);">UNQUALIFIED 9</span>
<span class="t" style="left:291.70px;top:366px;font-size:5.9px;color:#fff;letter-spacing:-0.017px;font-family:'NanumGothic','Liberation Sans',sans-serif;text-shadow:0 0 0.4px rgba(255,255,255,.9);">LOST 15</span>
<span class="t" style="left:398.90px;top:366px;font-size:5.9px;color:#fff;font-family:'NanumGothic','Liberation Sans',sans-serif;text-shadow:0 0 0.4px rgba(255,255,255,.9);">LOST 35</span>
<div class="a" style="left:560px;top:128.0px;width:345px;height:213.6px;overflow:hidden"><span class="t" style="left:11.70px;top:-3.00px;font-size:6.6px;color:#666;">Let's manually estimate the forecast using your funnel numbers.</span></div>
<span class="t" style="left:577.10px;top:267px;font-size:7.0px;color:#222;">•</span>
<span class="t" style="left:583.10px;top:268px;font-size:6.6px;color:#333;letter-spacing:0.015px;">Identified</span>

<span class="t" style="left:620.20px;top:268px;font-size:6.6px;color:#333;letter-spacing:-0.032px;">Contacted:</span>
<span class="t" style="left:655.07px;top:266px;font-size:5.3px;color:#222;font-family:'Liberation Serif',serif;">150</span>
<span class="t" style="left:655.07px;top:272px;font-size:5.3px;color:#222;font-family:'Liberation Serif',serif;">250</span>
<div class="a" style="left:655.1px;top:270.6px;width:7.9px;height:0.500px;background:#666"></div>
<span class="t" style="left:666.60px;top:267px;font-size:8.2px;color:#222;font-family:'Liberation Serif',serif;transform:scaleX(1.2757);transform-origin:0 0;">=</span>
<span class="t" style="left:675.00px;top:267px;font-size:8.2px;color:#222;letter-spacing:-0.158px;font-family:'Liberation Serif',serif;">60%</span>
<span class="t" style="left:577.10px;top:277px;font-size:7.0px;color:#222;">•</span>
<span class="t" style="left:583.10px;top:278px;font-size:6.6px;color:#333;letter-spacing:-0.108px;">Contacted</span>

<span class="t" style="left:622.80px;top:278px;font-size:6.6px;color:#333;letter-spacing:-0.182px;">Discussion:</span>
<span class="t" style="left:658.17px;top:276px;font-size:5.3px;color:#222;font-family:'Liberation Serif',serif;">100</span>
<span class="t" style="left:658.17px;top:281px;font-size:5.3px;color:#222;font-family:'Liberation Serif',serif;">150</span>
<div class="a" style="left:658.1px;top:280.5px;width:8.1px;height:0.500px;background:#666"></div>
<span class="t" style="left:669.50px;top:277px;font-size:8.2px;color:#222;font-family:'Liberation Serif',serif;transform:scaleX(1.2973);transform-origin:0 0;">=</span>
<span class="t" style="left:677.80px;top:277px;font-size:8.2px;color:#222;letter-spacing:0.036px;font-family:'Liberation Serif',serif;">66.7%</span>
<span class="t" style="left:577.10px;top:287px;font-size:7.0px;color:#222;">•</span>
<span class="t" style="left:583.10px;top:288px;font-size:6.6px;color:#333;letter-spacing:-0.143px;">Discussion</span>

<span class="t" style="left:623.60px;top:288px;font-size:6.6px;color:#333;letter-spacing:-0.160px;">Won:</span>
<span class="t" style="left:642.50px;top:285px;font-size:5.3px;color:#222;font-family:'Liberation Serif',serif;">15</span>
<span class="t" style="left:641.17px;top:291px;font-size:5.3px;color:#222;font-family:'Liberation Serif',serif;">100</span>
<div class="a" style="left:640.9px;top:290.4px;width:8.5px;height:0.500px;background:#666"></div>
<span class="t" style="left:653.20px;top:287px;font-size:8.2px;color:#222;font-family:'Liberation Serif',serif;transform:scaleX(1.2757);transform-origin:0 0;">=</span>
<span class="t" style="left:661.60px;top:287px;font-size:8.2px;color:#222;letter-spacing:-0.408px;font-family:'Liberation Serif',serif;">15%</span>
<span class="t" style="left:577.10px;top:328px;font-size:7.0px;color:#222;">•</span>
<span class="t" style="left:582.90px;top:329px;font-size:6.6px;color:#333;letter-spacing:-0.030px;">Expected to be Contacted:</span>
<span class="t" style="left:662.20px;top:328px;font-size:8.2px;color:#222;letter-spacing:0.191px;font-family:'Liberation Serif',serif;">250 × 0.60 = 150</span>
<div class="a" style="left:560px;top:128.0px;width:345px;height:213.6px;overflow:hidden"><span class="t" style="left:17.10px;top:210.00px;font-size:7.0px;color:#222;">•</span></div>
<div class="a" style="left:560px;top:128.0px;width:345px;height:213.6px;overflow:hidden"><span class="t" style="left:22.90px;top:211.00px;font-size:6.6px;color:#333;letter-spacing:-0.064px;">Expected to reach Discussion:</span></div>
<div class="a" style="left:560px;top:128.0px;width:345px;height:213.6px;overflow:hidden"><span class="t" style="left:112.30px;top:210.00px;font-size:8.2px;color:#222;letter-spacing:0.088px;font-family:'Liberation Serif',serif;">150 × 0.667 ≈ 100</span></div>
<span class="t" style="left:113.81px;top:64px;font-size:6.9px;color:#222;font-weight:700;">B</span>
<span class="t" style="left:128.63px;top:64px;font-size:7.0px;color:#444;font-family:'Liberation Serif',serif;font-style:italic;">I</span>
<span class="t" style="left:140.83px;top:63px;font-size:6.0px;color:#444;">U</span>
<div class="a" style="left:140.600px;top:69px;width:4.800px;height:0.600px;background:#444"></div>
<span class="t" style="left:153.93px;top:63px;font-size:6.0px;color:#444;">D</span>
<div class="a" style="left:153.700px;top:68.800px;width:4.800px;height:0.400px;background:#666"></div>
<div class="a" style="left:153.700px;top:69.900px;width:4.800px;height:0.400px;background:#666"></div>
<span class="t" style="left:166.46px;top:64px;font-size:6.0px;color:#444;">ab</span>
<div class="a" style="left:166.200px;top:67.100px;width:7.200px;height:0.600px;background:#555"></div>
<span class="t" style="left:227.60px;top:62px;font-size:6.6px;color:#444;">A</span>
</div>
</body></html>
